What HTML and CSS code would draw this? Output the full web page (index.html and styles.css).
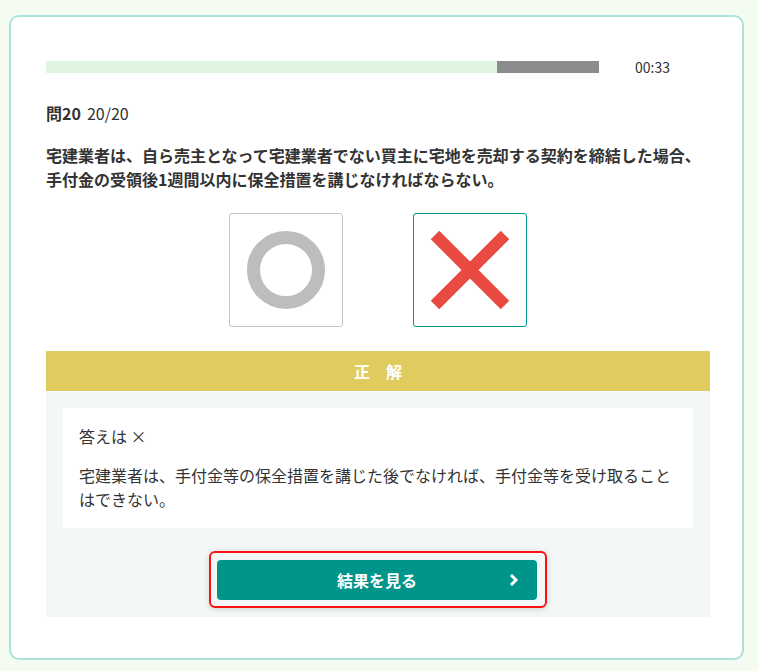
FILE: index.html
```html
<!DOCTYPE html>
<html lang="ja">
<head>
    <meta charset="UTF-8">
    <meta name="viewport" content="width=device-width, initial-scale=1.0">
    <title>問題 20/20</title>
    <link rel="stylesheet" href="styles.css">
</head>
<body>
    <div class="card">
        <div class="timer-row">
            <div class="timer-bar"><div class="timer-fill"></div></div>
            <div class="timer-text">00:33</div>
        </div>

        <p class="q-num"><b>問20</b><span class="q-count">20/20</span></p>
        <p class="q-text">宅建業者は、自ら売主となって宅建業者でない買主に宅地を売却する契約を締結した場合、手付金の受領後1週間以内に保全措置を講じなければならない。</p>

        <div class="choices">
            <div class="choice">
                <svg width="78" height="78" viewBox="0 0 78 78">
                    <circle cx="39" cy="39" r="32.5" fill="none" stroke="#bdbdbd" stroke-width="13"/>
                </svg>
            </div>
            <div class="choice selected">
                <svg width="78" height="78" viewBox="0 0 78 78">
                    <path d="M4 4 L74 74 M74 4 L4 74" stroke="#e84a41" stroke-width="12"/>
                </svg>
            </div>
        </div>

        <div class="result-head">正　解</div>
        <div class="result-body">
            <div class="answer-box">
                <p>答えは ×</p>
                <p>宅建業者は、手付金等の保全措置を講じた後でなければ、手付金等を受け取ることはできない。</p>
            </div>
            <div class="btn-wrap">
                <button class="next-btn">結果を見る
                    <svg class="chev" width="10" height="12" viewBox="0 0 10 12">
                        <path d="M2 1 L7 6 L2 11" fill="none" stroke="#fff" stroke-width="3"/>
                    </svg>
                </button>
            </div>
        </div>
    </div>
</body>
</html>
```

FILE: styles.css
```css
body {
    font-family: "Noto Sans CJK JP", "Noto Sans", sans-serif;
    background-color: #f4fbf1;
    color: #333;
    margin: 0;
    padding: 15px 14px 0 9px;
}
.card {
    background: #fff;
    border: 2px solid #abe2dc;
    border-radius: 10px;
    padding: 40px 32px 41px 35px;
}
.timer-row {
    display: flex;
    align-items: center;
}
.timer-bar {
    width: 553px;
    height: 12px;
    background: #8c8c8c;
}
.timer-fill {
    width: 451px;
    height: 100%;
    background: #dff5e0;
}
.timer-text {
    flex: 1;
    padding-right: 4px;
    text-align: center;
    font-size: 14px;
    color: #333;
}
.q-num {
    margin: 24px 0 0;
    font-size: 16px;
    line-height: 24px;
}
.q-count {
    margin-left: 6px;
}
.q-text {
    margin: 18px 0 0;
    font-size: 16px;
    font-weight: 700;
    line-height: 24px;
}
.choices {
    display: flex;
    justify-content: center;
    gap: 70px;
    margin-top: 22px;
}
.choice {
    width: 112px;
    height: 112px;
    border: 1px solid #c4c4c4;
    border-radius: 3px;
    display: flex;
    align-items: center;
    justify-content: center;
}
.choice.selected {
    border-color: #00958a;
}
.result-head {
    margin-top: 24px;
    height: 40px;
    line-height: 40px;
    background: #e0cc5e;
    color: #fff;
    font-weight: 700;
    font-size: 16px;
    text-align: center;
}
.result-body {
    background: #f3f7f7;
    padding: 17px 17px 9px;
}
.answer-box {
    background: #fff;
    padding: 16px 16px 17px;
}
.answer-box p {
    margin: 0;
    font-size: 16px;
    line-height: 24px;
}
.answer-box p + p {
    margin-top: 15px;
}
.btn-wrap {
    width: 321px;
    margin: 23px auto 0;
    padding: 7px 7px 6px 6px;
    border: 2px solid #ff1010;
    border-radius: 6px;
    box-shadow: 0 1px 6px rgba(0, 0, 0, 0.15);
}
.next-btn {
    position: relative;
    display: block;
    width: 320px;
    height: 40px;
    background: #00958a;
    border: none;
    border-radius: 4px;
    color: #fff;
    font-family: "Noto Sans CJK JP", sans-serif;
    font-size: 16px;
    font-weight: 700;
    cursor: pointer;
}
.chev {
    position: absolute;
    right: 18px;
    top: 14px;
}
```
